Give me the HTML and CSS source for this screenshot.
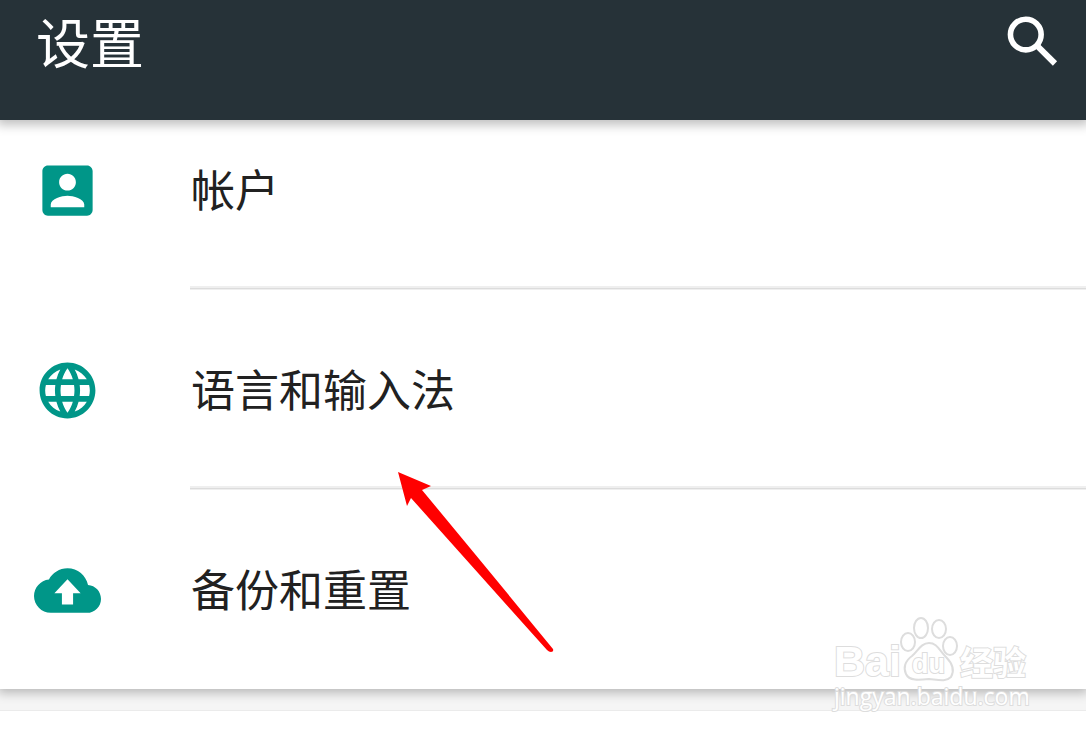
FILE: index.html
```html
<!DOCTYPE html>
<html lang="zh-CN">
<head>
  <meta charset="UTF-8">
  <meta name="viewport" content="width=device-width, initial-scale=1.0">
  <title>设置</title>
  <link rel="stylesheet" href="styles.css">
</head>
<body>

<header class="toolbar">
  <h1>设置</h1>
  <button class="search" type="button" aria-label="搜索">
    <svg viewBox="0 0 24 24">
      <circle cx="9.6" cy="9.5" r="5.500" fill="none" stroke="#fff" stroke-width="2"/>
      <path d="M13.200 14.600l1.500-1.500 6.100 6-1.500 1.600z" fill="#fff"/>
    </svg>
  </button>
</header>

<main>
  <ul class="settings">
    <li>
      <a href="#accounts">
        <svg class="icon" viewBox="0 0 24 24"><path d="M3 5v14c0 1.100.89 2 2 2h14c1.100 0 2-.9 2-2V5c0-1.100-.9-2-2-2H5c-1.110 0-2 .9-2 2zm12 4c0 1.660-1.340 3-3 3s-3-1.340-3-3 1.340-3 3-3 3 1.340 3 3zm-9 8c0-2 4-3.100 6-3.100s6 1.100 6 3.100v1H6v-1z"/></svg>
        <span>帐户</span>
      </a>
    </li>
    <li>
      <a href="#language">
        <svg class="icon" viewBox="0 0 24 24"><path d="M11.990 2C6.470 2 2 6.480 2 12s4.470 10 9.990 10C17.520 22 22 17.520 22 12S17.520 2 11.990 2zm6.930 6h-2.950c-.32-1.250-.78-2.450-1.380-3.560 1.840.63 3.370 1.910 4.330 3.560zM12 4.040c.83 1.200 1.480 2.530 1.910 3.960h-3.820c.43-1.430 1.080-2.760 1.910-3.960zM4.260 14C4.100 13.360 4 12.690 4 12s.1-1.360.26-2h3.380c-.08.66-.14 1.320-.14 2s.06 1.340.14 2H4.260zm.82 2h2.950c.32 1.250.78 2.450 1.380 3.560-1.840-.63-3.370-1.900-4.330-3.560zm2.950-8H5.080c.96-1.660 2.490-2.930 4.330-3.560C8.810 5.550 8.350 6.750 8.030 8zM12 19.960c-.83-1.200-1.480-2.530-1.910-3.960h3.820c-.43 1.430-1.080 2.760-1.910 3.960zM14.340 14H9.660c-.09-.66-.16-1.320-.16-2s.07-1.350.16-2h4.680c.09.65.16 1.320.16 2s-.07 1.340-.16 2zm.25 5.560c.6-1.110 1.060-2.310 1.380-3.560h2.950c-.96 1.650-2.490 2.930-4.330 3.560zM16.360 14c.08-.66.14-1.320.14-2s-.06-1.340-.14-2h3.380c.16.64.26 1.310.26 2s-.1 1.360-.26 2h-3.380z"/></svg>
        <span>语言和输入法</span>
      </a>
    </li>
    <li>
      <a href="#backup">
        <svg class="icon" viewBox="0 0 24 24"><path d="M19.350 10.040C18.670 6.590 15.640 4 12 4 9.110 4 6.600 5.640 5.350 8.040 2.340 8.360 0 10.910 0 14c0 3.310 2.690 6 6 6h13c2.760 0 5-2.240 5-5 0-2.640-2.050-4.780-4.650-4.960zM14 13v4h-4v-4H7.300l4.700-5 4.700 5z"/></svg>
        <span>备份和重置</span>
      </a>
    </li>
  </ul>
  <section class="next-card"></section>

  <svg class="arrow" viewBox="0 0 156 180">
    <path d="M0 0L33 14L24 18Q92 100 155 177Q156 180 153 180Q151 180 149 178Q80 101 13 26L9 34Z" fill="#f00"/>
  </svg>

  <div class="watermark">
    <div class="brand">
      <span class="latin">Bai</span>
      <svg class="paw" viewBox="0 0 60 66">
        <g fill="#fff" stroke="#ddd" stroke-width="2">
          <ellipse cx="8" cy="25" rx="7" ry="9"/>
          <ellipse cx="21" cy="11" rx="7" ry="10"/>
          <ellipse cx="39" cy="12" rx="7" ry="9"/>
          <ellipse cx="50" cy="29" rx="7" ry="9"/>
          <path d="M29 26C21 26 18 34 12 39C5 44 3 51 6 57C9 64 19 63 29 62C39 63 46 65 51 60C55 53 52 46 46 40C39 33 37 26 29 26Z"/>
        </g>
        <text x="12" y="56">du</text>
      </svg>
      <span class="cjk">经验</span>
    </div>
    <div class="site">jingyan.baidu.com</div>
  </div>
</main>

</body>
</html>
```

FILE: styles.css
```css
* {
  box-sizing: border-box;
}

body {
  margin: 0;
  min-height: 100vh;
  background-color: #fff;
  color: #212121;
  font-family: "Noto Sans CJK SC", sans-serif;
  overflow: hidden;
}

.toolbar {
  position: relative;
  z-index: 1;
  display: flex;
  justify-content: space-between;
  align-items: flex-start;
  height: 120px;
  padding: 8px 20px 0 36px;
  background-color: #263238;
  box-shadow: 0 2px 10px 3px rgba(0, 0, 0, 0.25);
}

.toolbar h1 {
  margin: 0;
  color: #fff;
  font-size: 54px;
  font-weight: 400;
  line-height: 66px;
}

.search {
  width: 67px;
  height: 67px;
  padding: 0;
  border: none;
  background: none;
  cursor: pointer;
}

.search svg {
  display: block;
  width: 100%;
}

/* the list is scrolled a little way under the toolbar */
main {
  position: relative;
  margin-top: -30px;
  background-color: #f5f5f5;
}

.settings {
  margin: 0;
  padding: 0;
  list-style: none;
  background-color: #fff;
  box-shadow: 0 2px 10px 2px rgba(0, 0, 0, 0.25);
}

.settings a {
  display: flex;
  align-items: center;
  height: 196px;
  padding: 4px 0 0 34px;
  color: inherit;
  font-size: 44px;
  line-height: 64px;
  text-decoration: none;
}

.settings a span {
  padding-bottom: 4px;
}

.settings li:not(:last-child)::after {
  content: "";
  display: block;
  height: 4px;
  margin-left: 190px;
  background: linear-gradient(#efefef 2px, #dcdcdc 2px, #dcdcdc 3px, #efefef 3px);
}

.settings li:last-child a {
  height: 199px;
  padding-top: 1px;
}

.icon {
  flex: none;
  width: 67px;
  height: 67px;
  margin-right: 90px;
  fill: #009688;
}

.next-card {
  height: 40px;
  margin-top: 21px;
  border-top: 1px solid #ebebeb;
  background-color: #fff;
}

.arrow {
  position: absolute;
  top: 382px;
  left: 398px;
  width: 156px;
}

.watermark {
  position: absolute;
  top: 527px;
  right: 56px;
  width: 196px;
  color: #fff;
}

.brand {
  display: flex;
  align-items: flex-end;
  height: 66px;
}

.latin,
.cjk,
.site {
  -webkit-text-stroke: 2px #ddd;
  paint-order: stroke fill;
}

.latin {
  width: 66px;
  font: bold 43px/44px "Liberation Sans", sans-serif;
}

.paw {
  flex: none;
  width: 60px;
  height: 66px;
}

.paw text {
  fill: #fff;
  stroke: #ddd;
  stroke-width: 2px;
  paint-order: stroke;
  font: bold 27px "Liberation Sans", sans-serif;
}

.cjk {
  font-size: 33px;
  font-weight: 700;
  line-height: 44px;
}

.site {
  font: 23px/26px "Open Sans", sans-serif;
}
```
